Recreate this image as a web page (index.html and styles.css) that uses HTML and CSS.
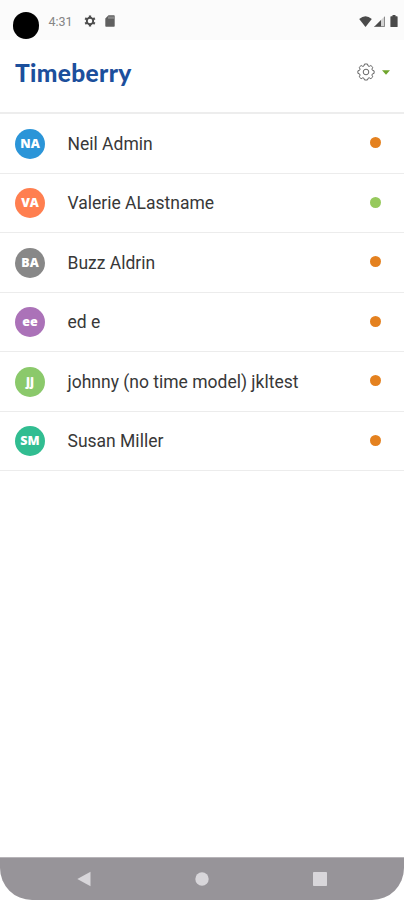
FILE: index.html
```
<!DOCTYPE html>
<html lang="en">
<head>
<meta charset="utf-8">
<title>Timeberry</title>
<link rel="stylesheet" href="styles.css">
</head>
<body>
<div class="screen">
  <div class="status">
    <span class="camera"></span>
    <span class="clock">4:31</span>
    <svg class="cog" width="12" height="12" viewBox="0 0 12 12"><circle cx="6" cy="6" r="3.2" fill="none" stroke="#4d4d4d" stroke-width="1.9"/><g stroke="#4d4d4d" stroke-width="2.3"><path d="M6 .4V2.3M6 9.7v1.9M1.15 3.2l1.65.95M9.2 7.85l1.65.95M1.15 8.8l1.65-.95M9.2 4.15l1.65-.95"/></g></svg>
    <svg class="card" width="10" height="12" viewBox="0 0 10 12"><path d="M3.5.3H9q.7 0 .7.7v10q0 .7-.7.7H1q-.7 0-.7-.7V3.5z" fill="#606060"/><path d="M4 1.500v2.300M6 1.500v2.300M8 1.500v2.300" stroke="#bbb" stroke-width=".9"/></svg>
    <span class="signals">
      <svg width="13" height="11" viewBox="0 0 13 11"><path d="M6.5 11 .2 3Q6.500-2.500 12.800 3z" fill="#4a4a4a"/></svg>
      <svg width="11" height="11" viewBox="0 0 11 11"><path d="M11 0v11H0z" fill="#d2d2d2"/><path d="M7 4v7H0z" fill="#4a4a4a"/><path d="M10.500.8v9.700H1" fill="none" stroke="#777" stroke-width=".8"/></svg>
      <svg class="battery" width="8" height="12" viewBox="0 0 8 12"><path d="M2.500 0h3v1.300H7q.6 0 .6.600v9.500q0 .6-.6.600H1q-.6 0-.6-.6V1.900q0-.6.6-.6h1.500z" fill="#4a4a4a"/></svg>
    </span>
  </div>
  <header class="header">
    <h1 class="logo">Timeberry</h1>
    <div class="settings">
      <svg width="18" height="18" viewBox="0 0 18 18" fill="none" stroke="#666" stroke-width="1"><circle cx="9" cy="9" r="2.800"/><path stroke-linejoin="round" d="M7.500 1h3l.5 1.900 1.200.5 1.700-.9 1.900 1.900-.9 1.700.5 1.200 1.700.5v2.600l-1.700.5-.5 1.200.9 1.700-1.900 1.900-1.700-.9-1.200.5-.5 1.700h-3L7 15.300l-1.200-.5-1.700.9-1.900-1.900.9-1.700-.5-1.200L.9 10.400V7.800l1.700-.5.5-1.200-.9-1.700 1.900-1.900 1.700.9L7 2.900z"/></svg>
      <svg width="8" height="5" viewBox="0 0 8 5"><path d="M0 .3h8L4 4.700z" fill="#6fa52c"/></svg>
    </div>
  </header>
  <ul class="people">
    <li class="person"><span class="avatar blue">NA</span><span class="name">Neil Admin</span><i class="dot"></i></li>
    <li class="person"><span class="avatar coral">VA</span><span class="name">Valerie ALastname</span><i class="dot active"></i></li>
    <li class="person"><span class="avatar gray">BA</span><span class="name">Buzz Aldrin</span><i class="dot"></i></li>
    <li class="person"><span class="avatar purple">ee</span><span class="name">ed e</span><i class="dot"></i></li>
    <li class="person"><span class="avatar green">jj</span><span class="name">johnny (no time model) jkltest</span><i class="dot"></i></li>
    <li class="person"><span class="avatar teal">SM</span><span class="name">Susan Miller</span><i class="dot"></i></li>
  </ul>
  <nav class="navbar">
    <svg width="14" height="16" viewBox="0 0 14 16"><path d="M13.500.8v14.400L.3 8z" fill="#d8d6da"/></svg>
    <svg width="14" height="14" viewBox="0 0 14 14"><circle cx="7" cy="7" r="6.700" fill="#d8d6da"/></svg>
    <svg width="14" height="14" viewBox="0 0 14 14"><rect width="14" height="14" rx=".8" fill="#d8d6da"/></svg>
  </nav>
</div>
</body>
</html>
```
FILE: styles.css
```
* { box-sizing: border-box; }
body { margin: 0; background: #fff; font-family: Roboto, sans-serif; }
svg { display: block; flex: none; }
.screen { width: 404px; height: 900px; display: flex; flex-direction: column; background: #fff; overflow: hidden; }
.status { height: 40px; flex: none; display: flex; align-items: center; padding: 2px 6px 0 12.5px; background: #fbfbfb; }
.camera { width: 26.5px; height: 26.5px; border-radius: 50%; background: #000; margin-top: 9px; }
.clock { width: 35px; margin-left: 9.5px; font-size: 12.5px; color: #858585; }
.card { margin-left: 9px; }
.signals { display: flex; align-items: center; gap: 2px; margin-left: auto; }
.battery { margin-left: 3px; }
.header { height: 74px; flex: none; display: flex; align-items: flex-start; justify-content: space-between; padding: 19px 14px 0 15px; border-bottom: 2px solid #ededed; }
.logo { margin: 0; font: 900 24.500px/28px Lato, sans-serif; color: #1c4f9c; letter-spacing: .35px; }
.settings { display: flex; align-items: center; gap: 7px; margin-top: 4px; }
.people { list-style: none; margin: 0; padding: 0; }
.person { height: 59.500px; display: flex; align-items: center; padding: 1px 23px 0 15px; border-bottom: 1.500px solid #ececec; }
.avatar { width: 30px; height: 30px; border-radius: 50%; display: flex; align-items: center; justify-content: center; padding-bottom: 1px; font: 800 12.500px "Open Sans", sans-serif; color: #fff; }
.blue { background: #2b95d8; }
.coral { background: #ff7f50; }
.gray { background: #888; }
.purple { background: #ab72b8; }
.green { background: #8bc96b; }
.teal { background: #31bd91; }
.name { margin-left: 22.500px; font-size: 17.500px; line-height: 24px; color: #383838; white-space: nowrap; }
.dot { width: 11px; height: 11px; margin: -2px 0 0 auto; border-radius: 50%; background: #e4811f; }
.active { background: #96c95c; }
.navbar { height: 43px; flex: none; margin-top: auto; display: flex; align-items: center; justify-content: space-between; padding: 0 77px; background: #979499; border-top: 1px solid #b7b4b8; border-radius: 0 0 32px 32px; }
```
